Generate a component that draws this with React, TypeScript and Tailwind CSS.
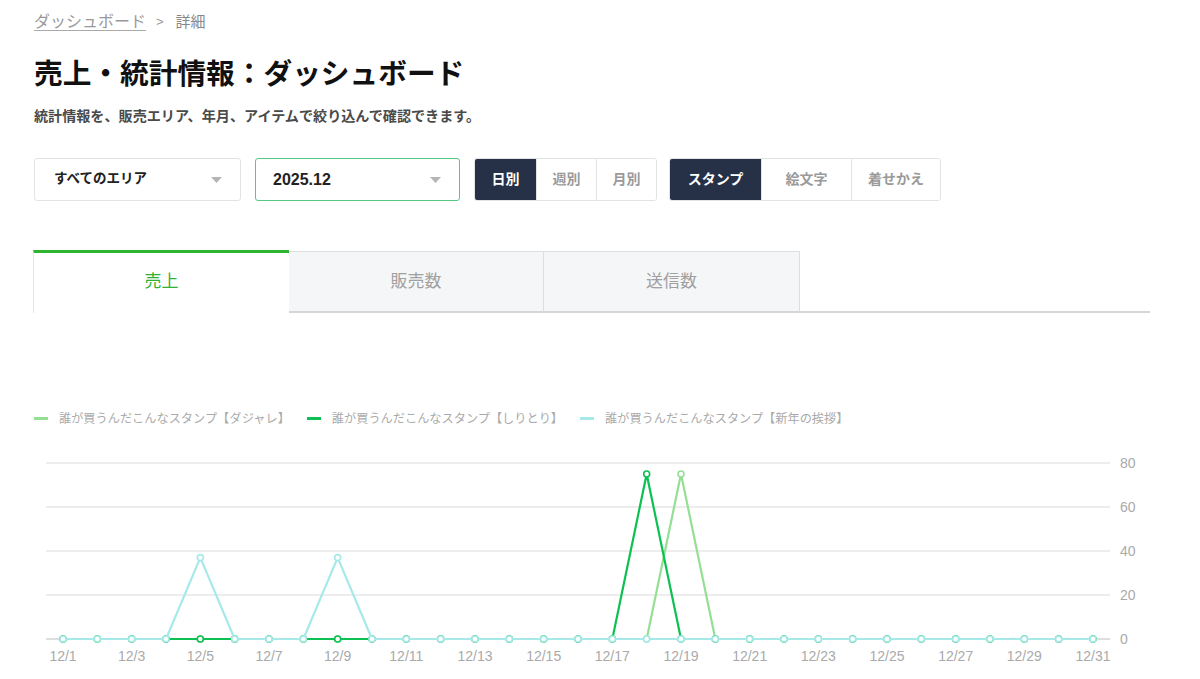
import React from "react";

const FONT = { fontFamily: '"Liberation Sans", "Noto Sans CJK JP", sans-serif' };

const X0 = 63;
const DX = (1093 - 63) / 30;
const Y0 = 639;
const K = 2.2;

const zeros = () => Array.from({ length: 31 }, () => 0);
const light = zeros();
light[18] = 75;
const dark = zeros();
dark[17] = 75;
const cyan = zeros();
cyan[4] = 37;
cyan[8] = 37;

const SERIES = [
  { name: "誰が買うんだこんなスタンプ【ダジャレ】", color: "#95df95", data: light },
  { name: "誰が買うんだこんなスタンプ【しりとり】", color: "#0cc152", data: dark },
  { name: "誰が買うんだこんなスタンプ【新年の挨拶】", color: "#a6e9e8", data: cyan },
];

function Caret() {
  return (
    <svg width="11" height="6" viewBox="0 0 11 6" className="shrink-0">
      <path d="M0 0h11L5.5 6z" fill="#b5b5b5" />
    </svg>
  );
}

function Select({ label, active }: { label: string; active?: boolean }) {
  return (
    <div
      className={`flex h-[43px] items-center justify-between rounded-[3px] bg-white pr-[18px] ${
        active ? "w-[205px] border-[1.5px] border-[#55c884] pl-[17px]" : "w-[207px] border border-[#e3e3e3] pl-[19px]"
      }`}
    >
      <span className={`font-bold text-[#222] ${active ? "text-[16px]" : "text-[13.5px]"}`}>{label}</span>
      <Caret />
    </div>
  );
}

function Segmented({ items }: { items: { label: string; w: string }[] }) {
  return (
    <div className="flex h-[43px] overflow-hidden rounded-[3px] border border-[#e3e3e3]">
      {items.map((it, i) => (
        <div
          key={it.label}
          className={`flex items-center justify-center text-[14px] font-bold ${it.w} ${
            i === 0 ? "bg-[#263148] text-white" : "border-l border-[#e3e3e3] bg-white text-[#9a9a9a]"
          }`}
        >
          {it.label}
        </div>
      ))}
    </div>
  );
}

function Chart() {
  const grid = [80, 60, 40, 20];
  const px = (i: number) => X0 + i * DX;
  const py = (v: number) => Y0 - v * K;
  return (
    <svg width={1117} height={229} viewBox="33 450 1117 229" className="block">
      {grid.map((g) => (
        <line key={g} x1={46} x2={1110} y1={py(g)} y2={py(g)} stroke="#e7e7e7" strokeWidth={1.5} />
      ))}
      <line x1={46} x2={1110} y1={Y0} y2={Y0} stroke="#bdbdbd" strokeWidth={1} />
      {[80, 60, 40, 20, 0].map((g) => (
        <text key={g} x={1120} y={py(g) + 5} fontSize={14} fill="#aaaaaa" style={FONT}>
          {g}
        </text>
      ))}
      {Array.from({ length: 16 }, (_, k) => k * 2).map((i) => (
        <text key={i} x={px(i)} y={661} fontSize={14} fill="#aaaaaa" textAnchor="middle" style={FONT}>
          {`12/${i + 1}`}
        </text>
      ))}
      {SERIES.map((s) => (
        <g key={s.name}>
          <polyline
            points={s.data.map((v, i) => `${px(i)},${py(v)}`).join(" ")}
            fill="none"
            stroke={s.color}
            strokeWidth={2.2}
            strokeLinejoin="round"
          />
          {s.data.map((v, i) => (
            <circle key={i} cx={px(i)} cy={py(v)} r={3} fill="#fff" stroke={s.color} strokeWidth={1.6} />
          ))}
        </g>
      ))}
    </svg>
  );
}

export default function App() {
  return (
    <div className="min-h-screen bg-white pl-[33px] pr-[50px]" style={FONT}>
      <div className="flex h-[20px] items-center pt-[12px] box-content leading-[20px]">
        <span className="pl-px text-[16px] text-[#999] underline underline-offset-[3px] decoration-[#aaa]">
          ダッシュボード
        </span>
        <span className="ml-[10px] text-[13px] text-[#999]">&gt;</span>
        <span className="ml-[12px] text-[15px] text-[#888]">詳細</span>
      </div>

      <h1 className="mt-[22px] pl-px text-[28.7px] font-bold leading-[40px] text-[#111]">
        売上・統計情報：ダッシュボード
      </h1>
      <p className="mt-[12px] pl-px text-[14.1px] font-bold leading-[20px] text-[#4a4a4a]">
        統計情報を、販売エリア、年月、アイテムで絞り込んで確認できます。
      </p>

      <div className="mt-[32px] flex items-center pl-px">
        <Select label="すべてのエリア" />
        <div className="ml-[14px]">
          <Select label="2025.12" active />
        </div>
        <div className="ml-[14px]">
          <Segmented
            items={[
              { label: "日別", w: "w-[61px]" },
              { label: "週別", w: "w-[60px]" },
              { label: "月別", w: "w-[60px]" },
            ]}
          />
        </div>
        <div className="ml-[12px]">
          <Segmented
            items={[
              { label: "スタンプ", w: "w-[91px]" },
              { label: "絵文字", w: "w-[90px]" },
              { label: "着せかえ", w: "w-[89px]" },
            ]}
          />
        </div>
      </div>

      <div className="mt-[49px] flex h-[63px]">
        <div className="flex w-[256px] items-center justify-center border-l border-t-[3px] border-l-[#e6e6e6] border-t-[#2db52f] bg-white pb-[3px] text-[17px] text-[#2fb135]">
          売上
        </div>
        <div className="mt-px flex w-[255px] items-center justify-center border-b-2 border-r border-t border-[#dedede] border-b-[#d6d6d6] bg-[#f5f6f7] text-[17px] text-[#a0a0a0]">
          販売数
        </div>
        <div className="mt-px flex w-[256px] items-center justify-center border-b-2 border-r border-t border-[#dedede] border-b-[#d6d6d6] bg-[#f5f6f7] text-[17px] text-[#a0a0a0]">
          送信数
        </div>
        <div className="flex-1 border-b-2 border-[#d6d6d6]" />
      </div>

      <div className="mt-[96px] flex h-[20px] items-center gap-[17px] pl-px">
        {SERIES.map((s) => (
          <div key={s.name} className="flex items-center">
            <span className="h-[3px] w-[14px]" style={{ backgroundColor: s.color }} />
            <span className="ml-[11px] text-[12.2px] text-[#aaa]">{s.name}</span>
          </div>
        ))}
      </div>

      <div className="mt-[21px]">
        <Chart />
      </div>
    </div>
  );
}
